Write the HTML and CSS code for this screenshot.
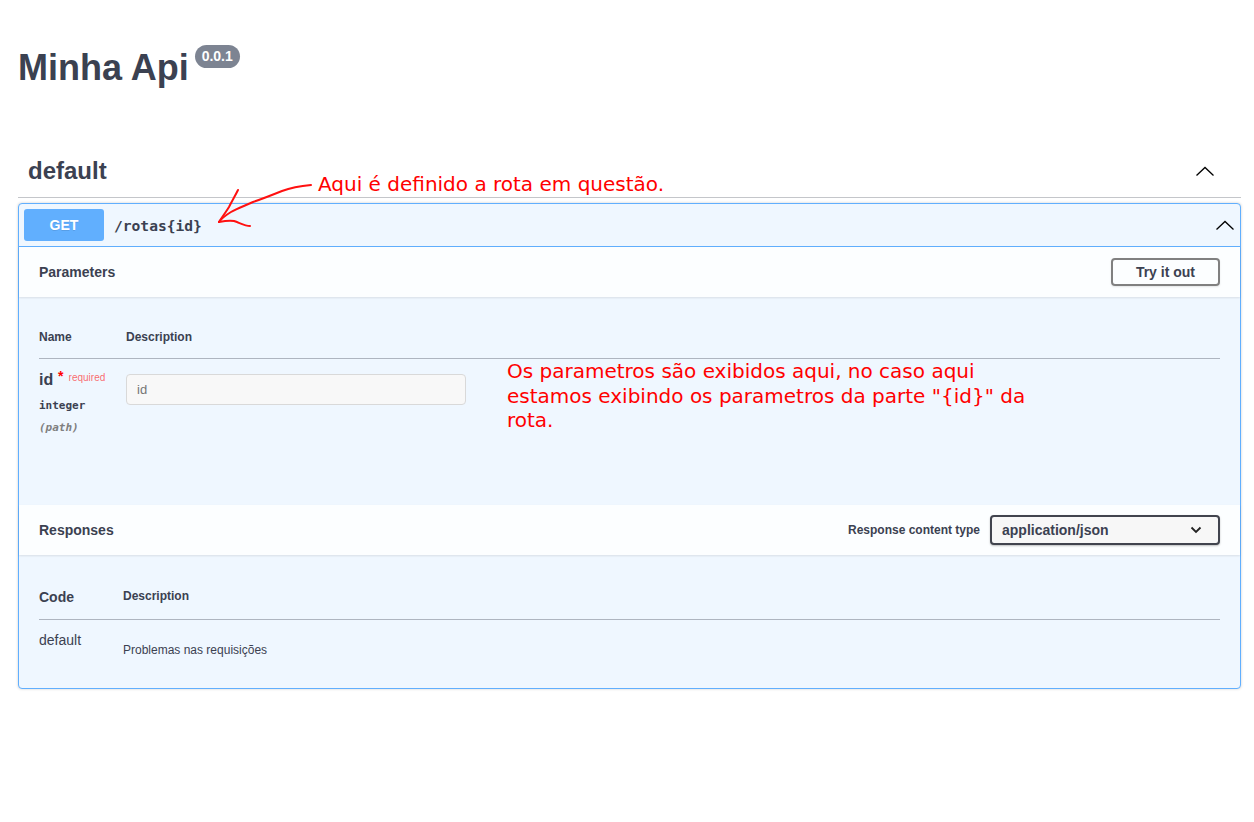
FILE: index.html
```html
<!DOCTYPE html>
<html lang="pt">
<head>
<meta charset="utf-8">
<title>Minha Api</title>
<link rel="stylesheet" href="styles.css">
</head>
<body>
<div class="wrapper">
  <div class="info">
    <h2 class="title">Minha Api</h2>
    <span class="version">0.0.1</span>
  </div>

  <section class="tag-section">
    <h3 class="opblock-tag">
      <span class="tag-name">default</span>
      <svg class="chevron tag-chevron" width="20" height="20" viewBox="0 0 20 20"><polyline points="1.5,14.5 10,6.5 18.5,14.5" fill="none" stroke="#000" stroke-width="1.3"/></svg>
    </h3>

    <div class="opblock">
      <div class="summary">
        <span class="method">GET</span>
        <span class="path">/rotas{id}</span>
        <svg class="chevron" width="20" height="20" viewBox="0 0 20 20"><polyline points="1.5,14.5 10,6.5 18.5,14.5" fill="none" stroke="#000" stroke-width="1.3"/></svg>
      </div>

      <div class="section-header">
        <h4 class="section-title">Parameters</h4>
        <button class="try-out">Try it out</button>
      </div>
      <div class="table-container params">
        <table class="parameters">
          <thead>
            <tr><th class="col-name">Name</th><th>Description</th></tr>
          </thead>
          <tbody>
            <tr>
              <td class="col-name">
                <div class="param-name">id<span class="star">&nbsp;*</span><span class="required">required</span></div>
                <div class="param-type">integer</div>
                <div class="param-in">(path)</div>
              </td>
              <td><div class="input">id</div></td>
            </tr>
          </tbody>
        </table>
      </div>

      <div class="section-header">
        <h4 class="section-title">Responses</h4>
        <div class="content-type">
          <span class="ct-label">Response content type</span>
          <div class="select">
            <span>application/json</span>
            <svg width="12" height="8" viewBox="0 0 12 8"><polyline points="1.5,1.5 6,6 10.5,1.5" fill="none" stroke="#222" stroke-width="1.8"/></svg>
          </div>
        </div>
      </div>
      <div class="table-container responses">
        <table class="responses-table">
          <thead>
            <tr><th class="col-code">Code</th><th class="col-desc">Description</th></tr>
          </thead>
          <tbody>
            <tr>
              <td class="col-code">default</td>
              <td class="col-desc"><p>Problemas nas requisições</p></td>
            </tr>
          </tbody>
        </table>
      </div>
    </div>
  </section>
</div>

<div class="note note-route">Aqui é definido a rota em questão.</div>
<div class="note note-params">Os parametros são exibidos aqui, no caso aqui<br>estamos exibindo os parametros da parte "{id}" da<br>rota.</div>
<svg class="arrow" width="120" height="60" viewBox="200 175 120 60">
  <path d="M311,185 C300,186 290,188 282,191 C272,195 262,199 253,202 C244,206 236,209 231,212 C226,215 222,218 219,222" fill="none" stroke="#ff1010" stroke-width="2" stroke-linecap="round"/>
  <path d="M238,190 C235,196 232,201 229,207 C226,212 222,217 219,222" fill="none" stroke="#ff1010" stroke-width="2" stroke-linecap="round"/>
  <path d="M219,222 C224,221 229,220 234,221 C240,223 245,226 250,226" fill="none" stroke="#ff1010" stroke-width="2" stroke-linecap="round"/>
</svg>
</body>
</html>
```

FILE: styles.css
```css
html, body {
  margin: 0;
  padding: 0;
  background: #fff;
}

body {
  font-family: "Liberation Sans", Arial, sans-serif;
  color: #3b4151;
  position: relative;
  min-height: 822px;
}

.wrapper {
  padding: 0 13px 0 18px;
}

.info {
  display: flex;
  align-items: flex-start;
  padding-top: 45px;
}

.title {
  margin: 2px 0 0;
  font-size: 36px;
  font-weight: 700;
  line-height: 41px;
  color: #3b4151;
}

.version {
  margin-left: 6px;
  height: 23px;
  line-height: 23px;
  padding: 0 7px;
  border-radius: 12px;
  background: #7d8492;
  color: #fff;
  font-size: 14px;
  font-weight: 700;
}

.tag-section {
  margin-top: 53px;
}

.opblock-tag {
  display: flex;
  align-items: center;
  justify-content: space-between;
  height: 36px;
  margin: 0 0 5px;
  padding: 12px 26px 8px 10px;
  font-size: 24px;
  font-weight: 700;
  border-bottom: 1px solid rgba(59, 65, 81, 0.3);
  color: #3b4151;
}

.chevron {
  display: block;
  flex: none;
}

.opblock {
  border: 1px solid #61affe;
  border-radius: 4px;
  background: #eff7ff;
  box-shadow: 0 0 3px rgba(0, 0, 0, 0.19);
}

.summary {
  display: flex;
  align-items: center;
  padding: 5px;
  border-bottom: 1px solid #61affe;
}

.method {
  width: 80px;
  height: 32px;
  line-height: 32px;
  text-align: center;
  background: #61affe;
  color: #fff;
  border-radius: 3px;
  font-size: 14px;
  font-weight: 700;
  text-shadow: 0 1px 0 rgba(0, 0, 0, 0.1);
}

.path {
  flex: 1;
  padding: 0 10px;
  font-family: "DejaVu Sans Mono", monospace;
  font-size: 14.6px;
  font-weight: 700;
  color: #3b4151;
}

.section-header {
  display: flex;
  align-items: center;
  justify-content: space-between;
  min-height: 50px;
  box-sizing: border-box;
  padding: 0 20px;
  background: rgba(255, 255, 255, 0.8);
  box-shadow: 0 1px 2px rgba(0, 0, 0, 0.1);
}

.section-title {
  margin: 0;
  font-size: 14px;
  font-weight: 700;
  color: #3b4151;
}

.try-out {
  height: 28px;
  padding: 0 23px;
  border: 2px solid #808080;
  border-radius: 4px;
  background: transparent;
  box-shadow: 0 1px 2px rgba(0, 0, 0, 0.1);
  font-family: "Liberation Sans", Arial, sans-serif;
  font-size: 14px;
  font-weight: 700;
  color: #3b4151;
}

.table-container {
  padding: 20px;
}

.params {
  height: 208px;
  box-sizing: border-box;
}

table {
  width: 100%;
  border-collapse: collapse;
}

.parameters th {
  text-align: left;
  font-size: 12px;
  font-weight: 700;
  line-height: 16px;
  padding: 12px 0 13px;
  border-bottom: 1px solid rgba(59, 65, 81, 0.2);
  color: #3b4151;
}

.parameters .col-name {
  width: 87px;
}

.parameters td {
  vertical-align: top;
  padding: 0;
}

.param-name {
  margin-top: 11px;
  font-size: 16px;
  font-weight: 700;
  line-height: 19px;
  white-space: nowrap;
}

.star {
  color: red;
  font-size: 14px;
  position: relative;
  top: -4px;
  padding-left: 1px;
}

.required {
  color: rgba(255, 0, 0, 0.6);
  font-size: 10px;
  font-weight: 400;
  position: relative;
  top: -4px;
  padding-left: 5px;
}

.param-type {
  padding: 8px 0;
  font-family: "DejaVu Sans Mono", monospace;
  font-size: 11px;
  font-weight: 700;
  line-height: 14px;
}

.param-in {
  font-family: "DejaVu Sans Mono", monospace;
  font-size: 11px;
  font-style: italic;
  font-weight: 700;
  line-height: 14px;
  color: #808080;
}

.input {
  margin-top: 15px;
  width: 340px;
  height: 31px;
  box-sizing: border-box;
  padding: 0 10px;
  line-height: 29px;
  background: #f8f8f8;
  border: 1px solid #d9d9d9;
  border-radius: 4px;
  font-size: 13px;
  color: #757575;
}

.content-type {
  display: flex;
  align-items: center;
}

.ct-label {
  font-size: 12px;
  font-weight: 700;
  margin-right: 10px;
}

.select {
  display: flex;
  align-items: center;
  justify-content: space-between;
  width: 230px;
  height: 30px;
  box-sizing: border-box;
  padding: 0 16px 0 10px;
  border: 2px solid #41444e;
  border-radius: 4px;
  background: #f7f7f7;
  box-shadow: 0 1px 2px rgba(0, 0, 0, 0.25);
  font-size: 14px;
  font-weight: 700;
}

.responses {
  padding-bottom: 21px;
}

.responses-table th {
  text-align: left;
  padding: 12px 0;
  line-height: 20px;
  font-weight: 700;
  border-bottom: 1px solid rgba(59, 65, 81, 0.2);
}

.responses-table th.col-code {
  width: 84px;
  font-size: 14px;
}

.responses-table th.col-desc {
  font-size: 12px;
  vertical-align: top;
  padding-top: 11px;
}

.responses-table td {
  vertical-align: top;
  padding: 10px 0 10px;
}

.responses-table td.col-code {
  font-size: 14px;
  line-height: 20px;
}

.responses-table p {
  margin: 13px 0 0;
  font-size: 12px;
  line-height: 14px;
}

.note {
  position: absolute;
  color: #ff0000;
  font-family: "DejaVu Sans", sans-serif;
  font-size: 20px;
  white-space: nowrap;
}

.note-route {
  left: 318px;
  top: 172px;
  line-height: 25px;
}

.note-params {
  left: 507px;
  top: 359px;
  line-height: 24.5px;
}

.arrow {
  position: absolute;
  left: 200px;
  top: 175px;
}
```
